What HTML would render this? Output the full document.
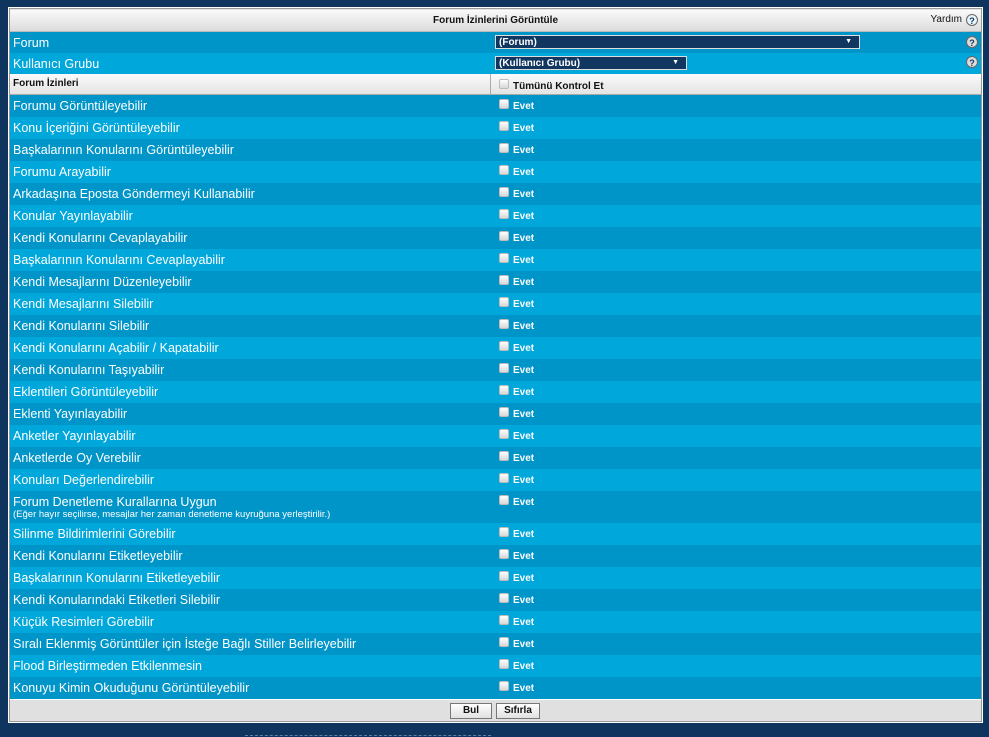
<!DOCTYPE html>
<html><head><meta charset="utf-8"><style>
*{margin:0;padding:0;box-sizing:border-box}
body{width:989px;height:737px;background:#0f355e;position:relative;overflow:hidden;font-family:"Liberation Sans","DejaVu Sans",sans-serif}
#frame{position:absolute;left:8px;top:7px;width:975px;height:716px;background:#e2e2e2;border:1px solid #fff;box-shadow:inset 0 0 0 1px #999}
.r{position:absolute;left:10px;width:971px;color:#fff;font-size:12.5px}
.d{background:#0095c9}.l{background:#00a7db}
.lab{position:absolute;left:3px;top:4px;white-space:nowrap}
.cb{position:absolute;left:489px;top:4px;width:10px;height:10px;background:linear-gradient(#fff,#d8d8d8);border:1px solid #bbb;border-radius:2px}
.ev{position:absolute;left:503px;top:6px;font-size:10px;font-weight:bold}
.hd{position:absolute;left:10px;top:10px;width:971px;height:22px;background:linear-gradient(#fafafa,#dcdcdc);border-bottom:1px solid #bbb;font-size:10px;color:#111}
.sel{position:absolute;background:#11365f;border:1px solid #ddd;color:#fff;font-size:10px;font-weight:bold;padding:1px 3px;height:14px}
.sel span{position:absolute;right:7px;top:2px;font-size:7px}
.q{position:absolute;width:12px;height:12px;border-radius:50%;background:#ddd;color:#11365f;font-size:9px;font-weight:bold;text-align:center;line-height:12px;border:1px solid #666}
.btn{position:absolute;top:703px;height:16px;background:linear-gradient(#fff,#e0e0e0);border:1px solid #777;font-size:10px;font-weight:bold;text-align:center;line-height:14px;color:#111}
</style></head><body>
<div id="frame"></div>
<div class="hd"><div style="position:absolute;left:0;width:100%;top:5px;text-align:center;font-weight:bold">Forum İzinlerini Görüntüle</div><div style="position:absolute;right:19px;top:4px">Yardım</div><div class="q" style="right:3px;top:4px;background:#e8f4fb">?</div></div>
<div class="r d" style="top:32px;height:21px"><div class="lab" style="top:4px">Forum</div></div>
<div class="sel" style="left:495px;top:35px;width:365px">(Forum)<span>▼</span></div>
<div class="q" style="left:966px;top:36px">?</div>
<div class="r l" style="top:53px;height:21px"><div class="lab" style="top:4px">Kullanıcı Grubu</div></div>
<div class="sel" style="left:495px;top:56px;width:192px">(Kullanıcı Grubu)<span>▼</span></div>
<div class="q" style="left:966px;top:56px">?</div>
<div class="r" style="top:74px;height:21px;background:linear-gradient(#fafafa,#e4e4e4);color:#111;font-size:10px;font-weight:bold;border-bottom:1px solid #aaa"><div class="lab" style="top:4px">Forum İzinleri</div><div style="position:absolute;left:480px;top:0;height:21px;border-left:1px solid #aaa"></div><div class="cb" style="top:5px"></div><div style="position:absolute;left:503px;top:7px">Tümünü Kontrol Et</div></div>
<div id="rows"></div>
<div class="r" style="top:699px;height:21px;background:#e0e0e0;border-top:1px solid #fff"></div>
<div class="btn" style="left:450px;width:42px">Bul</div>
<div class="btn" style="left:496px;width:44px">Sıfırla</div>
<div style="position:absolute;left:245px;top:735px;width:246px;border-top:1px dashed #5f7fa0"></div>
<script>
var a=["Forumu Görüntüleyebilir","Konu İçeriğini Görüntüleyebilir","Başkalarının Konularını Görüntüleyebilir","Forumu Arayabilir","Arkadaşına Eposta Göndermeyi Kullanabilir","Konular Yayınlayabilir","Kendi Konularını Cevaplayabilir","Başkalarının Konularını Cevaplayabilir","Kendi Mesajlarını Düzenleyebilir","Kendi Mesajlarını Silebilir","Kendi Konularını Silebilir","Kendi Konularını Açabilir / Kapatabilir","Kendi Konularını Taşıyabilir","Eklentileri Görüntüleyebilir","Eklenti Yayınlayabilir","Anketler Yayınlayabilir","Anketlerde Oy Verebilir","Konuları Değerlendirebilir","Forum Denetleme Kurallarına Uygun","Silinme Bildirimlerini Görebilir","Kendi Konularını Etiketleyebilir","Başkalarının Konularını Etiketleyebilir","Kendi Konularındaki Etiketleri Silebilir","Küçük Resimleri Görebilir","Sıralı Eklenmiş Görüntüler için İsteğe Bağlı Stiller Belirleyebilir","Flood Birleştirmeden Etkilenmesin","Konuyu Kimin Okuduğunu Görüntüleyebilir"];
var y=95,h="";
a.forEach(function(t,i){var hh=i==18?32:22;var ex=i==18?'<div style="position:absolute;left:3px;top:18px;font-size:9.5px;white-space:nowrap">(Eğer hayır seçilirse, mesajlar her zaman denetleme kuyruğuna yerleştirilir.)</div>':'';
h+='<div class="r '+(i%2?'l':'d')+'" style="top:'+y+'px;height:'+hh+'px"><div class="lab">'+t+'</div>'+ex+'<div class="cb"></div><div class="ev">Evet</div></div>';y+=hh;});
document.getElementById('rows').innerHTML=h;
</script>
</body></html>
